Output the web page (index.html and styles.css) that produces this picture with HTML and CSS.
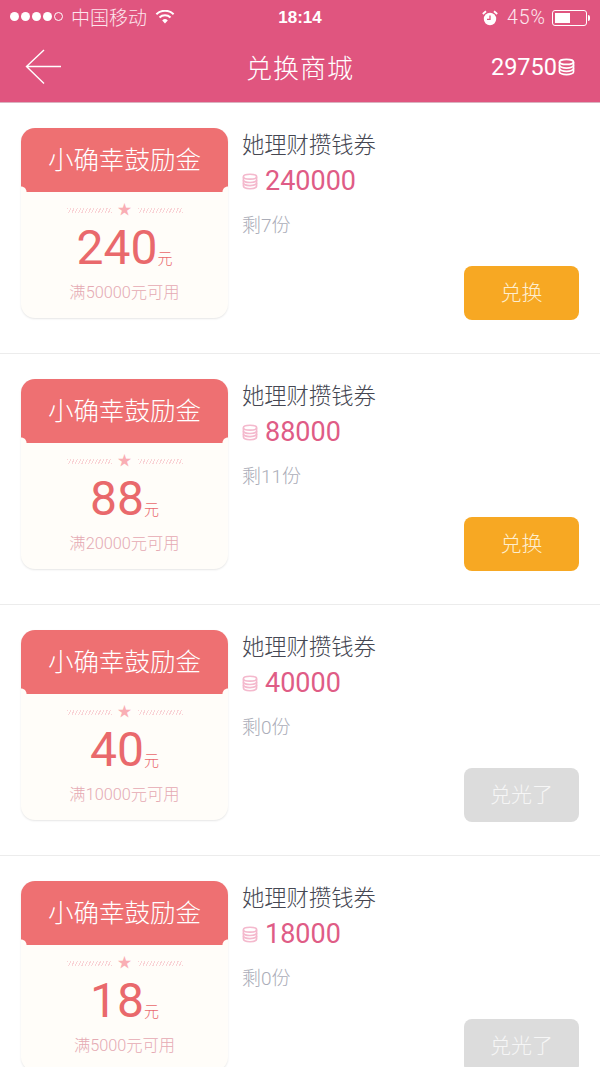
FILE: index.html
```html
<!DOCTYPE html>
<html lang="zh-CN">
<head>
  <meta charset="UTF-8">
  <meta name="viewport" content="width=device-width, initial-scale=1.0">
  <link rel="stylesheet" href="styles.css">
  <title>兑换商城</title>
</head>
<body>
<svg class="defs" width="0" height="0">
  <symbol id="coins" viewBox="0 0 16 16">
    <g fill="none" stroke="currentColor" stroke-width="1.6">
      <ellipse cx="8" cy="3.2" rx="6.6" ry="2.4"/>
      <path d="M1.4 3.2v9.4c0 1.4 3 2.6 6.6 2.6s6.6-1.2 6.6-2.6V3.2"/>
      <path d="M1.4 6.4c0 1.4 3 2.6 6.6 2.6s6.6-1.2 6.6-2.6"/>
      <path d="M1.4 9.5c0 1.4 3 2.6 6.6 2.6s6.6-1.2 6.6-2.6"/>
    </g>
  </symbol>
</svg>

<header class="top">
  <div class="status">
    <div class="status-left">
      <span class="dots"><i></i><i></i><i></i><i></i><i class="empty"></i></span>
      <span class="carrier">中国移动</span>
      <svg class="wifi" viewBox="0 0 18 13" width="20" height="14">
        <path d="M9 12.6 6.4 9.7a3.7 3.7 0 0 1 5.2 0z" fill="#fff"/>
        <path d="M3.9 7a7.4 7.4 0 0 1 10.2 0M1 3.9a11.6 11.6 0 0 1 16 0" fill="none" stroke="#fff" stroke-width="1.9"/>
      </svg>
    </div>
    <div class="clock">18:14</div>
    <div class="status-right">
      <svg class="alarm" viewBox="0 0 16 16" width="16" height="16">
        <circle cx="8" cy="9" r="6.2" fill="#fff"/>
        <path d="M8 5.4V9.4H5" fill="none" stroke="#e0557f" stroke-width="1.3"/>
        <path d="M.8 4 4 1.2M15.2 4 12 1.2" stroke="#fff" stroke-width="1.8"/>
      </svg>
      <span class="percent">45%</span>
      <span class="battery"><span class="battery-fill"></span></span>
      <span class="battery-tip"></span>
    </div>
  </div>
  <nav class="nav">
    <svg class="back" viewBox="0 0 36 36" width="36" height="36">
      <path d="M19 1 1.5 17.5 19 34.5M1.5 17.5H36" fill="none" stroke="#fff" stroke-width="1.4"/>
    </svg>
    <h1 class="title">兑换商城</h1>
    <div class="balance">29750<svg class="balance-icon"><use href="#coins"/></svg></div>
  </nav>
</header>

<main class="list">
  <section class="item">
    <div class="ticket">
      <div class="ticket-head">小确幸鼓励金</div>
      <div class="ticket-body">
        <div class="deco"><span class="hatch"></span><span class="star">★</span><span class="hatch"></span></div>
        <div class="amount"><b>240</b><span>元</span></div>
        <div class="limit">满50000元可用</div>
      </div>
    </div>
    <div class="info">
      <div class="name">她理财攒钱券</div>
      <div class="price"><svg class="price-icon"><use href="#coins"/></svg>240000</div>
      <div class="left">剩7份</div>
      <button class="btn">兑换</button>
    </div>
  </section>

  <section class="item">
    <div class="ticket">
      <div class="ticket-head">小确幸鼓励金</div>
      <div class="ticket-body">
        <div class="deco"><span class="hatch"></span><span class="star">★</span><span class="hatch"></span></div>
        <div class="amount"><b>88</b><span>元</span></div>
        <div class="limit">满20000元可用</div>
      </div>
    </div>
    <div class="info">
      <div class="name">她理财攒钱券</div>
      <div class="price"><svg class="price-icon"><use href="#coins"/></svg>88000</div>
      <div class="left">剩11份</div>
      <button class="btn">兑换</button>
    </div>
  </section>

  <section class="item">
    <div class="ticket">
      <div class="ticket-head">小确幸鼓励金</div>
      <div class="ticket-body">
        <div class="deco"><span class="hatch"></span><span class="star">★</span><span class="hatch"></span></div>
        <div class="amount"><b>40</b><span>元</span></div>
        <div class="limit">满10000元可用</div>
      </div>
    </div>
    <div class="info">
      <div class="name">她理财攒钱券</div>
      <div class="price"><svg class="price-icon"><use href="#coins"/></svg>40000</div>
      <div class="left">剩0份</div>
      <button class="btn btn-off">兑光了</button>
    </div>
  </section>

  <section class="item">
    <div class="ticket">
      <div class="ticket-head">小确幸鼓励金</div>
      <div class="ticket-body">
        <div class="deco"><span class="hatch"></span><span class="star">★</span><span class="hatch"></span></div>
        <div class="amount"><b>18</b><span>元</span></div>
        <div class="limit">满5000元可用</div>
      </div>
    </div>
    <div class="info">
      <div class="name">她理财攒钱券</div>
      <div class="price"><svg class="price-icon"><use href="#coins"/></svg>18000</div>
      <div class="left">剩0份</div>
      <button class="btn btn-off">兑光了</button>
    </div>
  </section>
</main>
</body>
</html>
```

FILE: styles.css
```css
* {
  box-sizing: border-box;
}

html, body {
  margin: 0;
  height: 1067px;
  overflow: hidden;
}

body {
  font-family: Roboto, "Noto Sans CJK SC", sans-serif;
  font-weight: 300;
  background-color: #fff;
}

.defs {
  display: block;
  height: 0;
}

.top {
  height: 103px;
  background-color: #e0557f;
  color: #fff;
  box-shadow: inset 0 -1px 0 #d9b3c0;
}

.status {
  height: 36px;
  padding: 0 10px;
  display: grid;
  grid-template-columns: 1fr auto 1fr;
  align-items: center;
  font-size: 18px;
}

.status-left, .status-right {
  display: flex;
  align-items: center;
}

.status-left {
  margin-bottom: 3px;
}

.status-right {
  justify-content: flex-end;
  margin-bottom: 1px;
}

.dots {
  display: flex;
  gap: 2px;
  margin-right: 8px;
}

.dots i {
  width: 9px;
  height: 9px;
  border-radius: 50%;
  background-color: #fff;
}

.dots i.empty {
  background: none;
  border: 1px solid #fff;
}

.carrier {
  font-size: 19px;
  color: #fde6ee;
}

.wifi {
  margin-left: 8px;
}

.clock {
  font-family: "Liberation Sans", sans-serif;
  font-size: 17px;
  font-weight: bold;
}

.alarm {
  margin-right: 9px;
}

.percent {
  font-size: 19.5px;
  letter-spacing: 1px;
  color: #fde6ee;
  margin-right: 6px;
}

.battery {
  width: 35px;
  height: 16px;
  border: 1px solid #fff;
  border-radius: 3px;
  padding: 2px;
}

.battery-fill {
  display: block;
  width: 50%;
  height: 100%;
  background-color: #fff;
}

.battery-tip {
  width: 2px;
  height: 6px;
  margin-left: 1px;
  background-color: #fff;
  border-radius: 0 2px 2px 0;
}

.nav {
  height: 66px;
  padding: 0 25px 4px;
  display: grid;
  grid-template-columns: 1fr auto 1fr;
  align-items: center;
}

.title {
  margin: 0 0 2px;
  font-size: 26px;
  font-weight: 300;
  letter-spacing: 1px;
}

.balance {
  justify-self: end;
  display: flex;
  align-items: center;
  font-size: 23.5px;
  font-weight: 400;
}

.balance-icon {
  width: 17px;
  height: 18px;
  margin-left: 1px;
}

.item {
  height: 251px;
  padding: 25px 21px 0;
  display: flex;
  border-bottom: 1px solid #ececec;
}

.ticket {
  width: 207px;
  height: 190px;
  flex: none;
  border-radius: 14px;
  box-shadow: 0 1px 2px rgba(0, 0, 0, 0.1);
  background-color: #fffdf9;
}

.ticket-head {
  height: 64px;
  padding-bottom: 6px;
  background:
    radial-gradient(circle at 0 100%, #fffdf9 5px, transparent 6px),
    radial-gradient(circle at 100% 100%, #fffdf9 5px, transparent 6px),
    #ee7072;
  border-radius: 14px 14px 0 0;
  color: #fff;
  font-size: 25.5px;
  display: flex;
  align-items: center;
  justify-content: center;
}

.ticket-body {
  height: 126px;
  display: flex;
  flex-direction: column;
  align-items: center;
}

.deco {
  margin-top: 9px;
  height: 16px;
  display: flex;
  align-items: center;
  gap: 6px;
}

.hatch {
  width: 45px;
  height: 5px;
  margin-top: 2px;
  background: repeating-linear-gradient(115deg, #f9d3d6 0 1px, transparent 1px 3px);
}

.star {
  font-size: 14px;
  line-height: 16px;
  color: #f9aeb4;
}

.amount {
  height: 50px;
  margin-top: 6px;
  display: flex;
  align-items: baseline;
  color: #e9696c;
  line-height: 50px;
}

.amount b {
  font-weight: 400;
  font-size: 48px;
}

.amount span {
  font-size: 15px;
}

.limit {
  margin-top: 10px;
  font-size: 16.3px;
  line-height: 20px;
  color: #e5aab3;
}

.info {
  flex: 1;
  padding-left: 14px;
  position: relative;
}

.name {
  padding-top: 1px;
  font-size: 22.3px;
  line-height: 32px;
  color: #454752;
}

.price {
  display: flex;
  align-items: center;
  height: 36px;
  margin-top: 2px;
  font-size: 27px;
  font-weight: 400;
  color: #df5c86;
}

.price-icon {
  width: 16px;
  height: 17px;
  margin-right: 7px;
  color: #f4b9cd;
}

.left {
  margin-top: 14px;
  font-size: 19px;
  line-height: 26px;
  color: #abadb8;
}

.btn {
  position: absolute;
  right: 0;
  top: 138px;
  width: 115px;
  height: 54px;
  border: none;
  border-radius: 8px;
  background-color: #f7a823;
  color: #fdeecf;
  font-family: inherit;
  font-weight: 300;
  font-size: 21px;
  padding: 0 0 4px;
}

.btn-off {
  background-color: #dcdcdc;
  color: #f6f6f6;
}
```
